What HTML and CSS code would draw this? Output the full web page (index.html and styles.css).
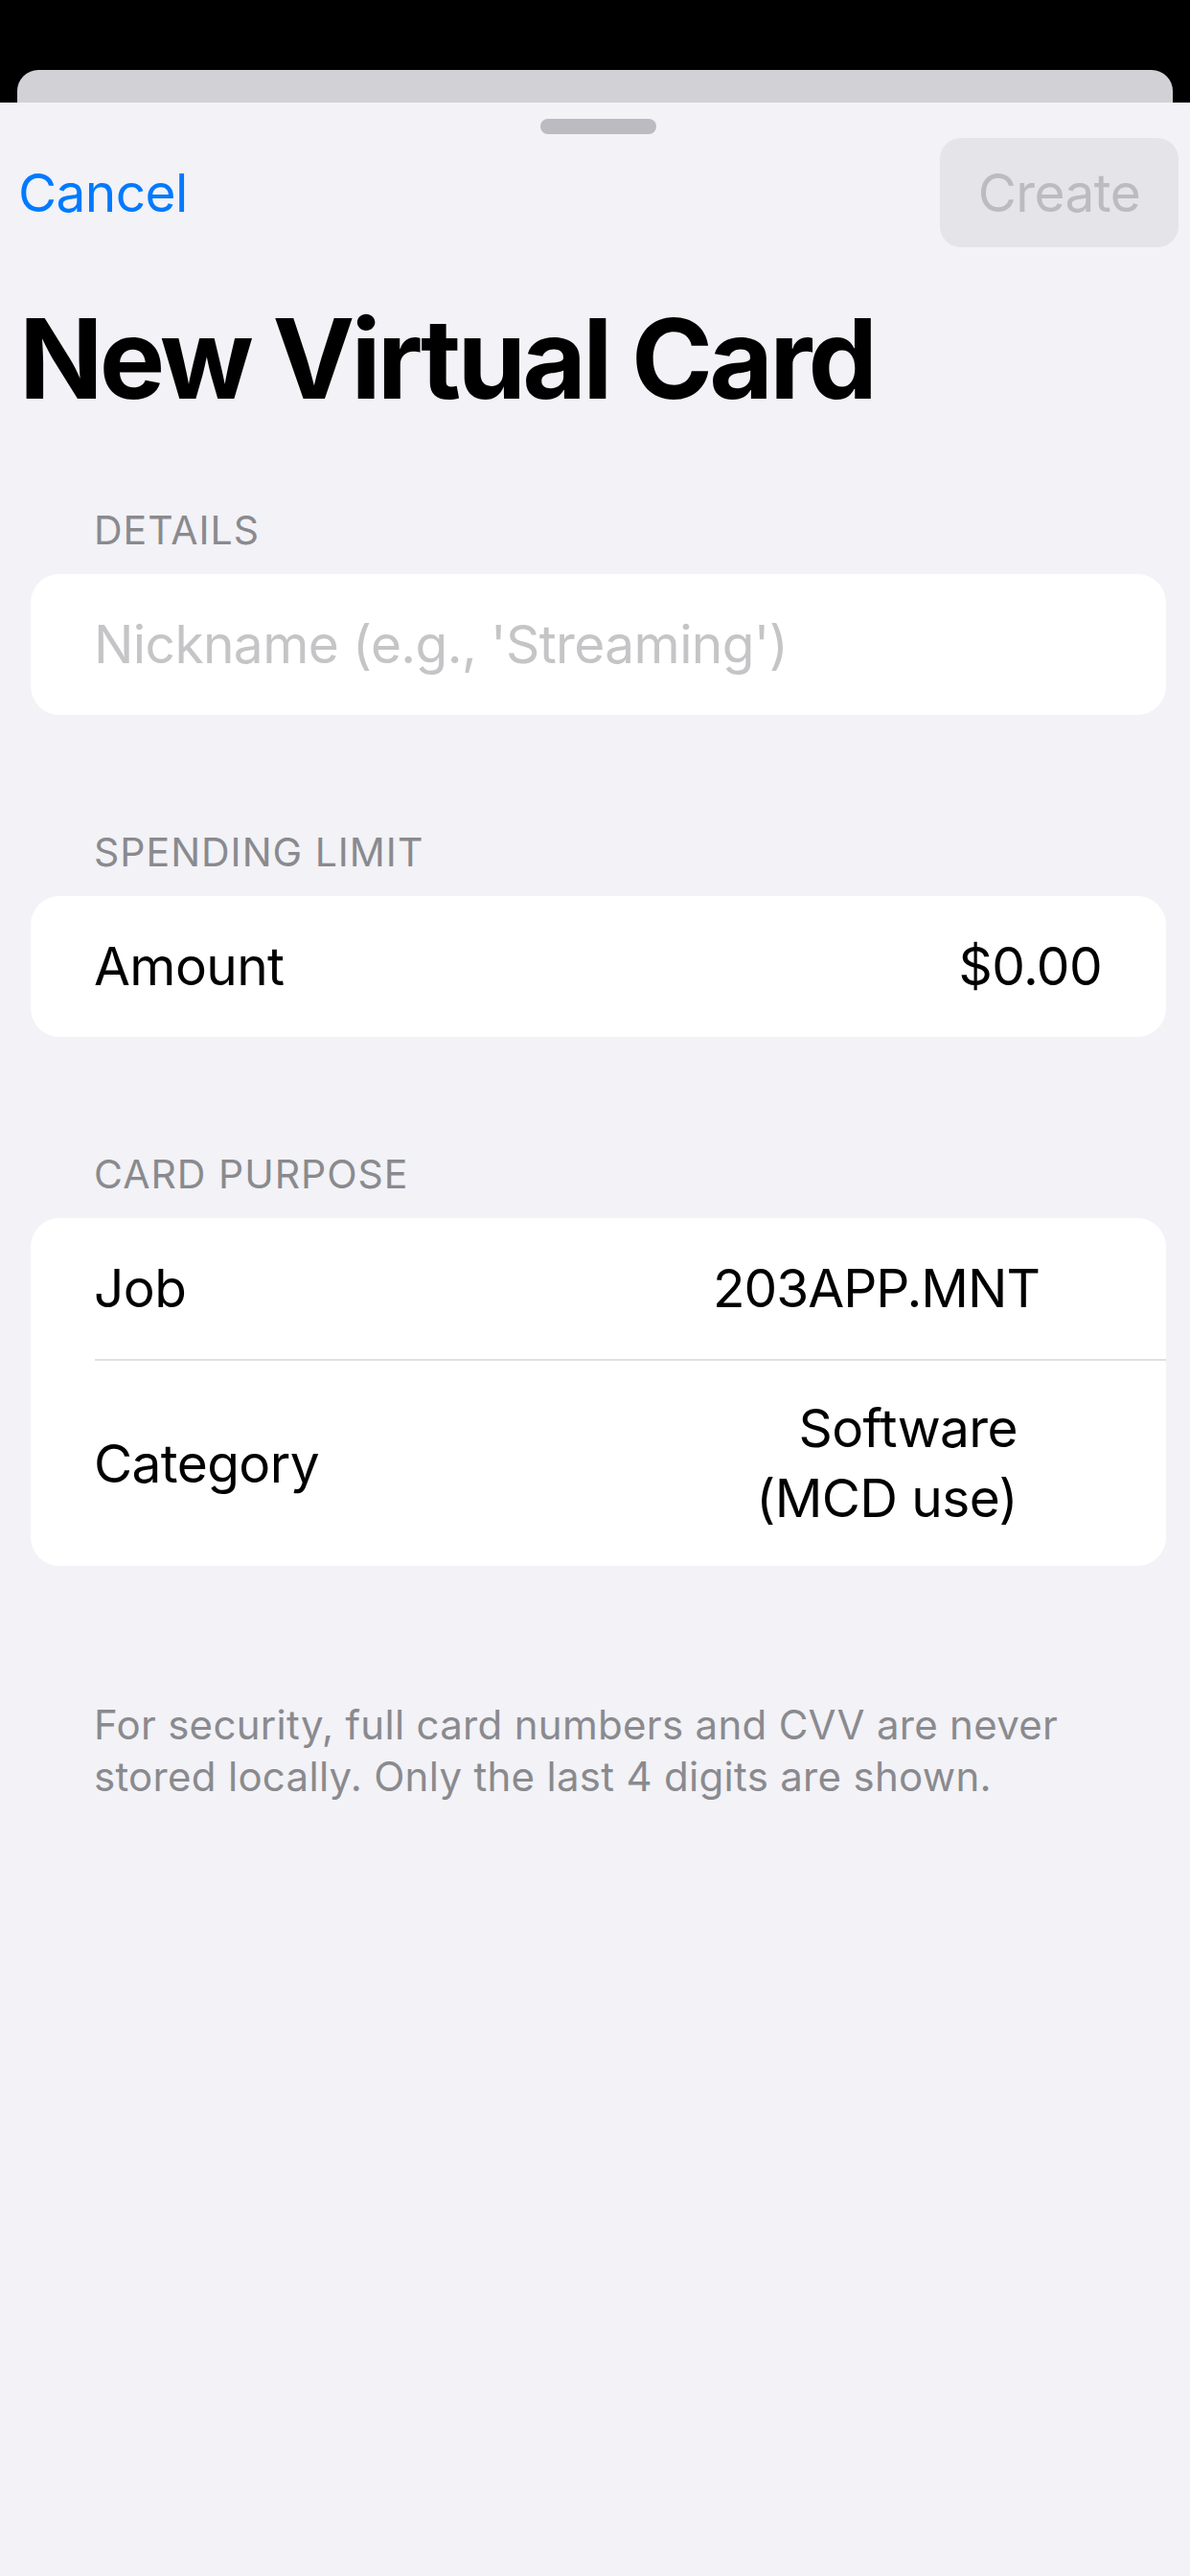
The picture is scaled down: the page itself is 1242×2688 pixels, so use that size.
FILE: index.html
```html
<!DOCTYPE html>
<html lang="en">
<head>
<meta charset="utf-8">
<title>New Virtual Card</title>
<link rel="stylesheet" href="styles.css">
</head>
<body>
<div class="status">
  <div class="backcard"></div>
</div>
<main class="sheet">
  <div class="grabber"></div>
  <nav class="nav">
    <span class="cancel">Cancel</span>
    <span class="create">Create</span>
  </nav>
  <h1 class="title">New Virtual Card</h1>

  <section class="group group-first">
    <div class="group-header">DETAILS</div>
    <div class="card">
      <div class="row"><span class="placeholder">Nickname (e.g., 'Streaming')</span></div>
    </div>
  </section>

  <section class="group">
    <div class="group-header">SPENDING LIMIT</div>
    <div class="card">
      <div class="row"><span class="label">Amount</span><span class="value">$0.00</span></div>
    </div>
  </section>

  <section class="group">
    <div class="group-header">CARD PURPOSE</div>
    <div class="card">
      <div class="row"><span class="label">Job</span><span class="value value-job">203APP.MNT</span></div>
      <div class="separator"></div>
      <div class="row row-tall"><span class="label">Category</span><span class="value value-cat">Software<br>(MCD use)</span></div>
    </div>
  </section>

  <p class="footer">For security, full card numbers and CVV are never stored locally. Only the last 4 digits are shown.</p>
</main>
</body>
</html>
```

FILE: styles.css
```css
html, body {
  margin: 0;
  padding: 0;
  background: #f2f2f7;
}

body {
  width: 1242px;
  height: 2688px;
  overflow: hidden;
  font-family: Inter, "Noto Sans", "Liberation Sans", sans-serif;
  color: #000;
}

.status {
  height: 107px;
  box-sizing: border-box;
  padding: 73px 18px 0 18px;
  background: #000;
}

.backcard {
  height: 34px;
  background: #d1d1d6;
  border-radius: 22px 22px 0 0;
}

.sheet {
  display: block;
  height: 2581px;
  box-sizing: border-box;
  padding-top: 17px;
  background: #f2f2f7;
}

.grabber {
  width: 121px;
  height: 16px;
  margin-left: 564px;
  border-radius: 8px;
  background: #bcbbc1;
}

.nav {
  display: flex;
  justify-content: space-between;
  align-items: center;
  height: 114px;
  margin-top: 4px;
  padding: 0 12px 0 19px;
}

.cancel {
  font-size: 55px;
  line-height: 73px;
  color: #007aff;
  letter-spacing: -0.6px;
}

.create {
  display: flex;
  align-items: center;
  justify-content: center;
  width: 249px;
  height: 114px;
  border-radius: 22px;
  background: #e4e4e9;
  color: #bbbbc0;
  font-size: 55px;
  letter-spacing: -0.6px;
}

.title {
  margin: 52px 0 0 0;
  padding-left: 20px;
  font-size: 115px;
  line-height: 130px;
  font-weight: 700;
  letter-spacing: -3.8px;
}

.group {
  margin-top: 118px;
}

.group-first {
  margin-top: 88px;
}

.group-header {
  padding-left: 98px;
  font-size: 41px;
  line-height: 50px;
  color: #8a8a8e;
  letter-spacing: 1px;
}

.card {
  margin: 21px 25px 0 32px;
  background: #fff;
  border-radius: 30px;
  overflow: hidden;
}

.row {
  display: flex;
  justify-content: space-between;
  align-items: center;
  min-height: 147px;
  box-sizing: border-box;
  padding: 0 67px 0 66px;
  font-size: 55px;
  line-height: 73px;
  letter-spacing: -0.6px;
}

.row-tall {
  min-height: 214px;
  padding-top: 34px;
  padding-bottom: 34px;
}

.placeholder {
  color: #c5c5c7;
}

.value {
  text-align: right;
}

.value-job {
  margin-right: 65px;
  letter-spacing: -1px;
}

.value-cat {
  margin-right: 88px;
}

.separator {
  height: 2px;
  margin-left: 67px;
  background: #e0e0e4;
}

.footer {
  margin: 139px 0 0 0;
  padding: 0 30px 0 98px;
  font-size: 42px;
  line-height: 54px;
  color: #8a8a8e;
  letter-spacing: 0.3px;
}
```
